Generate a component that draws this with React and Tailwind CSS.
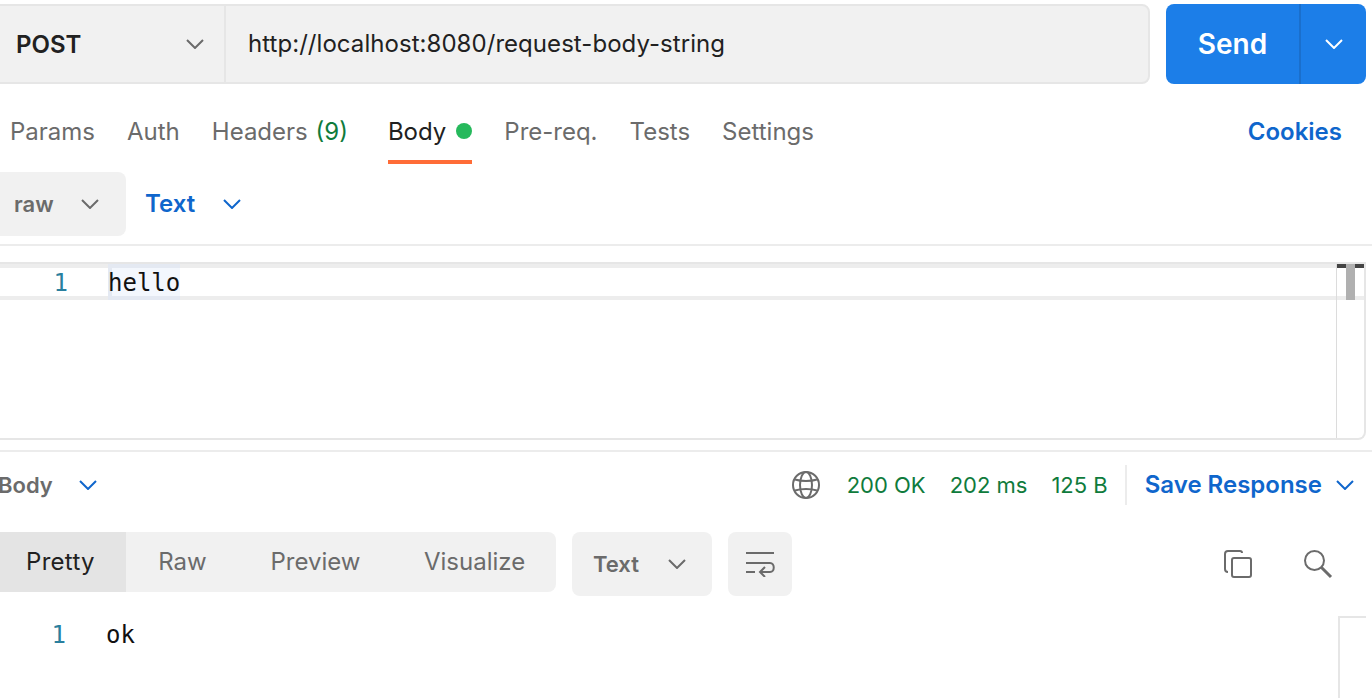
import React from 'react';

function Chevron({ className }) {
    return (
        <svg className={className} width="18" height="10" viewBox="0 0 18 10" fill="none" stroke="currentColor" strokeWidth="2">
            <path d="M1 1l8 8 8-8" />
        </svg>
    );
}

function Globe() {
    return (
        <svg width="28" height="28" viewBox="0 0 28 28" fill="none" stroke="#6b6b6b" strokeWidth="2">
            <circle cx="14" cy="14" r="13" />
            <ellipse cx="14" cy="14" rx="6" ry="13" />
            <path d="M3 8.5c6 2 16 2 22 0M3 19.5c6-2 16-2 22 0" />
        </svg>
    );
}

function CopyIcon() {
    return (
        <svg width="30" height="30" viewBox="0 0 30 30" fill="none" stroke="#6b6b6b" strokeWidth="2">
            <rect x="9" y="9" width="19" height="19" rx="2" />
            <path d="M5 23c-2 0-3-1-3-3V5c0-2 1-3 3-3h12c1 0 2 1 2 2" />
        </svg>
    );
}

function SearchIcon() {
    return (
        <svg width="30" height="30" viewBox="0 0 30 30" fill="none" stroke="#6b6b6b" strokeWidth="2">
            <circle cx="11.500" cy="11.500" r="9.500" />
            <path d="M18 18l10 10" strokeWidth="3" />
        </svg>
    );
}

function WrapIcon() {
    return (
        <svg width="30" height="26" viewBox="0 0 30 26" fill="none" stroke="#6b6b6b" strokeWidth="2">
            <path d="M1 2h28M1 12h24c5 0 5 9 0 9h-9" />
            <path d="M1 21h9" />
            <path d="M20 16l-5 5 5 5" />
        </svg>
    );
}

export default function App() {
    const mono = 'font-["DejaVu_Sans_Mono","Liberation_Mono",monospace]';

    return (
        <div className='h-[698px] w-[1372px] overflow-hidden bg-white font-["Inter",sans-serif] text-[24px] text-[#6b6b6b]'>
            {/* URL bar */}
            <div className="flex h-[84px] gap-4 pt-1 pr-1.5">
                <div className="-ml-2.5 flex h-20 flex-1 rounded-lg border-2 border-[#e6e6e6] bg-[#f1f1f1]">
                    <div className="flex w-[234px] items-center justify-between border-r-2 border-[#e6e6e6] pl-6 pr-5">
                        <span className="mt-0.5 font-semibold text-[#212121]">POST</span>
                        <Chevron className="text-[#6b6b6b]" />
                    </div>
                    <div className="flex items-center pl-[22px] tracking-[0.05px] text-[#212121]">http://localhost:8080/request-body-string</div>
                </div>
                <div className="flex h-20 w-[200px] overflow-hidden rounded-lg bg-[#1c7ee8] text-white">
                    <div className="flex w-[135px] items-center justify-center border-r-2 border-[#1a6fcc] text-[28px] font-semibold">Send</div>
                    <div className="flex flex-1 items-center justify-center">
                        <Chevron />
                    </div>
                </div>
            </div>

            {/* request tabs */}
            <div className="flex h-20 items-start pl-2.5 pr-[30px]">
                <div className="flex flex-1 gap-8 pt-[30px]">
                    <span>Params</span>
                    <span>Auth</span>
                    <span>
                        Headers <span className="ml-px text-[#0f7b3c]">(9)</span>
                    </span>
                    <span className="ml-2 flex h-[50px] items-start gap-2.5 border-b-4 border-[#ff6c37] text-[#212121]">
                        Body
                        <span className="mt-[9px] h-4 w-4 rounded-full bg-[#26b95c]" />
                    </span>
                    <span>Pre-req.</span>
                    <span>Tests</span>
                    <span>Settings</span>
                </div>
                <span className="pt-[30px] font-semibold text-[#0f66cc]">Cookies</span>
            </div>

            {/* body type */}
            <div className="flex h-[82px] items-start border-b-2 border-[#ececec] pt-2">
                <div className="flex h-16 w-[126px] items-center justify-between rounded-r-lg bg-[#f1f1f1] pl-3.5 pr-[27px] text-[22px] font-semibold">
                    raw
                    <Chevron />
                </div>
                <div className="ml-[19px] flex h-16 items-center gap-7 font-semibold text-[#0f66cc]">
                    Text
                    <Chevron />
                </div>
            </div>

            {/* editor */}
            <div className="relative mt-4 mr-1.5 h-[178px] rounded-br-lg border-y-2 border-r-2 border-[#e6e6e6]">
                <div className={`flex h-9 border-y-4 border-[#ededed] ${mono}`}>
                    <span className="w-[108px] pr-10 pt-px text-right leading-7 text-[#2a7f9e]">1</span>
                    <span className="-my-1 flex h-9 w-[72px] items-center border-y-4 border-l-4 border-[#e4e9f2] bg-[#f3f7fd] text-[#111111]">
                        <span className="-ml-1 mt-px">hello</span>
                    </span>
                </div>
                {/* scrollbar */}
                <div className="absolute bottom-0 right-0 top-0 w-7 border-l border-[#dcdcdc]">
                    <div className="absolute left-0 right-0 top-0 h-1 bg-[#444444]" />
                    <div className="absolute left-[9px] top-0 h-9 w-[9px] bg-[#b0b0b0]" />
                </div>
            </div>

            {/* response status */}
            <div className="mt-2.5 flex h-[68px] items-center border-t-2 border-[#ececec] pr-[18px]">
                <span className="-ml-0.5 flex flex-1 items-center text-[22px] font-semibold">
                    Body
                    <Chevron className="ml-[26px] text-[#0f66cc]" />
                </span>
                <Globe />
                <span className="ml-[27px] text-[22px] text-[#0f7b3c]">200 OK</span>
                <span className="ml-6 text-[22px] text-[#0f7b3c]">202 ms</span>
                <span className="ml-6 text-[22px] text-[#0f7b3c]">125 B</span>
                <span className="ml-[17px] h-10 w-0.5 bg-[#ececec]" />
                <span className="ml-[18px] font-semibold text-[#0f66cc]">Save Response</span>
                <Chevron className="ml-3.5 text-[#0f66cc]" />
            </div>

            {/* response toolbar */}
            <div className="mt-3.5 flex h-16 items-start">
                <div className="flex h-[60px] w-[556px] overflow-hidden rounded-r-lg bg-[#f1f1f1]">
                    <span className="flex w-[126px] items-center bg-[#e4e4e4] pl-[26px] tracking-[0.3px] text-[#212121]">Pretty</span>
                    <span className="flex w-[113px] items-center justify-center">Raw</span>
                    <span className="flex w-[153px] items-center justify-center">Preview</span>
                    <span className="flex flex-1 items-center pl-8">Visualize</span>
                </div>
                <div className="ml-4 flex h-16 w-[140px] items-center justify-between rounded-lg bg-[#f1f1f1] pl-[21px] pr-[26px] text-[22px] font-semibold">
                    Text
                    <Chevron />
                </div>
                <div className="ml-4 flex h-16 w-16 items-center justify-center rounded-lg bg-[#f1f1f1]">
                    <WrapIcon />
                </div>
                <div className="ml-auto flex items-center gap-[50px] pt-[17px] pr-[39px]">
                    <CopyIcon />
                    <SearchIcon />
                </div>
            </div>

            {/* response body */}
            <div className="mt-5 flex h-[82px] pr-1.5">
                <div className={`flex h-9 flex-1 items-center pt-0.5 ${mono}`}>
                    <span className="w-[106px] pr-10 text-right text-[#2a7f9e]">1</span>
                    <span className="text-[#111111]">ok</span>
                </div>
                <div className="w-7 border-l-2 border-t-2 border-[#e6e6e6]" />
            </div>
        </div>
    );
}
